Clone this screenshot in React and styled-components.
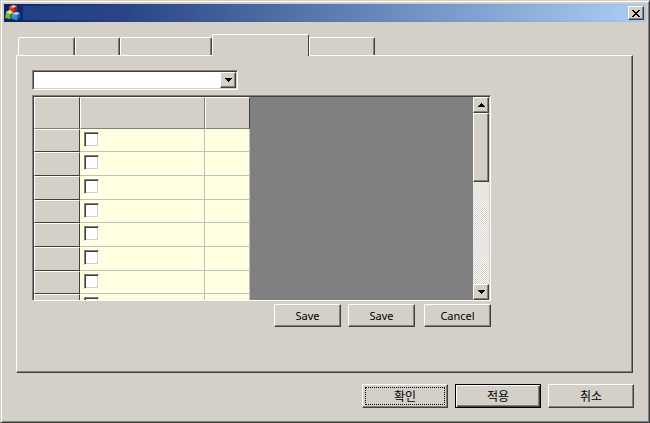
import React, { useState } from "react";
import styled, { createGlobalStyle, css } from "styled-components";

const face = "#d4d0c8";
const dark = "#404040";
const shadow = "#808080";

const GlobalStyle = createGlobalStyle`
  * { box-sizing: border-box; }
  body { margin: 0; background: ${face}; }
  button, select, input { font: inherit; color: inherit; border-radius: 0; }
`;

const raised = css`
  border: 1px solid;
  border-color: #fff ${dark} ${dark} #fff;
  box-shadow: inset -1px -1px 0 ${shadow};
  background: ${face};
`;

const Window = styled.main`
  min-height: 100vh;
  display: flex;
  flex-direction: column;
  padding: 2px;
  background: ${face};
  border: 1px solid;
  border-color: ${face} ${dark} ${dark} ${face};
  box-shadow: inset 1px 1px 0 #fff, inset -1px -1px 0 ${shadow};
  font: 12px/14px "Noto Sans", "Noto Sans CJK KR", sans-serif;
  color: #000;
`;

const TitleBar = styled.header`
  display: flex;
  align-items: center;
  justify-content: space-between;
  height: 18px;
  margin: 1px;
  padding: 0 2px 0 1px;
  background: linear-gradient(90deg, #0a246a, #a6caf0);
`;

const TitleFill = styled.div`
  flex: 1;
  height: 14px;
  margin: 0 2px;
  background: linear-gradient(90deg, #234083, #294585 17%, #a6caf0);
`;

const CloseButton = styled.button`
  ${raised}
  display: grid;
  place-items: center;
  width: 16px;
  height: 14px;
  padding: 0;
`;

const Tabs = styled.div`
  display: flex;
  align-items: flex-end;
  height: 21px;
  margin: 11px 15px 0 15px;
`;

const Tab = styled.button`
  width: ${(p) => p.$width}px;
  height: ${(p) => (p.$active ? 22 : 18)}px;
  margin-bottom: ${(p) => (p.$active ? -1 : 0)}px;
  padding: 0;
  border: solid;
  border-width: 1px 1px 0 1px;
  border-color: #fff ${dark} ${face} #fff;
  border-radius: 2px 2px 0 0;
  box-shadow: ${(p) => (p.$active ? "none" : `inset -1px 0 0 ${shadow}`)};
  background: ${face};
  position: relative;
`;

const Panel = styled.section`
  flex: 1;
  margin: 0 14px 0 13px;
  padding: 14px 15px;
  border: 1px solid;
  border-color: #fff ${dark} ${dark} #fff;
  box-shadow: inset -1px -1px 0 ${shadow};
`;

const Content = styled.div`
  width: 459px;
  max-width: 100%;
`;

const sunken = css`
  border: 1px solid;
  border-color: ${shadow} #fff #fff ${shadow};
`;

const Combo = styled.div`
  ${sunken}
  display: grid;
  grid-template-columns: 1fr 16px;
  width: 206px;
  height: 20px;
  padding: 1px;
  background: #fff;
  box-shadow: inset 1px 1px 0 ${dark}, inset -1px -1px 0 ${face};
`;

const ComboSelect = styled.select`
  grid-area: 1 / 1 / 2 / 3;
  appearance: none;
  width: 100%;
  height: 100%;
  border: 0;
  background: transparent;
`;

const ComboArrow = styled.span`
  ${raised}
  grid-area: 1 / 2;
  display: grid;
  place-items: center;
  pointer-events: none;
`;

const GridFrame = styled.div`
  ${sunken}
  display: flex;
  height: 206px;
  margin-top: 5px;
  padding: 1px 1px 0 1px;
  overflow: hidden;
  background: ${shadow};
  box-shadow: inset 1px 1px 0 ${dark}, inset -1px 0 0 ${face};
`;

const GridView = styled.div`
  flex: 1;
  overflow: hidden;
`;

const Table = styled.table`
  width: 216px;
  table-layout: fixed;
  border-collapse: separate;
  border-spacing: 0;
`;

const Row = styled.tr`
  height: 24px;
  &:nth-child(3n + 1) { height: 23px; }
`;

const HeadRow = styled.tr`
  height: 32px;
`;

const HeadCell = styled.th`
  padding: 0;
  width: ${(p) => (p.$width ? `${p.$width}px` : "auto")};
  background: ${face};
  border: 1px solid;
  border-color: #fff ${(p) => (p.$soft ? shadow : dark)} ${(p) => (p.scope === "row" ? dark : shadow)} #fff;
`;

const Cell = styled.td`
  padding: 0 0 0 3px;
  background: #ffffe1;
  border: solid #c0c0c0;
  border-width: 0 1px 1px 0;
  vertical-align: top;
`;

const Check = styled.input`
  appearance: none;
  display: block;
  width: 15px;
  height: 15px;
  margin: 3px 0 0 1px;
  background: #fff;
  border: 1px solid;
  border-color: ${shadow} #fff #fff ${shadow};
  box-shadow: inset 1px 1px 0 ${dark}, inset -1px -1px 0 ${face};
  &:checked { background: #404040; }
`;

const ScrollBar = styled.div`
  display: flex;
  flex-direction: column;
  width: 16px;
  background:
    linear-gradient(#d4d0c800 40%, #e8e6e2 46%, #d4d0c800 55%, #d4d0c800 62%, #e8e6e2 74%, #d4d0c800 84%),
    repeating-conic-gradient(#fff 0 25%, ${face} 0 50%) 0 0 / 2px 2px;
`;

const ScrollButton = styled.button`
  ${raised}
  display: grid;
  place-items: center;
  height: 16px;
  padding: 0;
`;

const Thumb = styled.div`
  ${raised}
  height: 69px;
  margin-bottom: auto;
`;

const Actions = styled.div`
  display: flex;
  justify-content: flex-end;
  gap: 7px;
  margin-top: 3px;
`;

const SmallButton = styled.button`
  ${raised}
  width: 67px;
  height: 23px;
  padding: 0;
  font-family: "Noto Sans", sans-serif;
  font-size: 11px;
  &:last-child { margin-left: 2px; }
`;

const Footer = styled.footer`
  display: flex;
  justify-content: flex-end;
  gap: 7px;
  padding: 11px 13px 12px;
`;

const DialogButton = styled.button`
  ${raised}
  width: 86px;
  height: 24px;
  padding: 2px;
  font-family: "Noto Sans CJK KR", sans-serif;
  ${(p) => p.$primary && css`
    border-color: #000;
    box-shadow: inset 1px 1px 0 #fff, inset -1px -1px 0 ${dark}, inset -2px -2px 0 ${shadow};
  `}
`;

const FocusRing = styled.span`
  display: block;
  height: 18px;
  line-height: 16px;
  border: 1px dotted ${(p) => (p.$on ? "#000" : "transparent")};
`;

const AppIcon = () => (
  <svg width="16" height="16" viewBox="0 0 16 16" aria-hidden="true">
    <path d="M4 2 7 0l5 1-1 7-3 1-4-2z" fill="#d63b20" />
    <path d="m5 2 3-2 4 1-3 2z" fill="#ffb29b" />
    <path d="m9 3 3-2-1 7-2 1z" fill="#a51d10" />
    <path d="m1 7 4-2 3 3v4l-3 2-5-1z" fill="#78b43c" />
    <path d="m1 7 4-2 3 3-3 1z" fill="#d5edab" />
    <path d="m5 9 3-1v4l-3 2z" fill="#3f7c24" />
    <path d="m7 9 4-2 4 1v4l-3 3-5-1z" fill="#3c8bd0" />
    <path d="m7 9 4-2 4 1-3 2z" fill="#a4dbf7" />
    <path d="m12 10 3-2v4l-3 3z" fill="#1b5da9" />
  </svg>
);

const Arrow = ({ up }) => (
  <svg width="7" height="4" viewBox="0 0 7 4" shapeRendering="crispEdges" aria-hidden="true">
    <path d={up ? "M3 0h1v1h1v1h1v1h1v1H0V3h1V2h1V1h1z" : "M0 0h7v1H6v1H5v1H4v1H3V3H2V2H1V1H0z"} />
  </svg>
);

const tabs = [57, 45, 92, 97, 66];
const rows = [1, 2, 3, 4, 5, 6, 7, 8];

export default function App() {
  const [active, setActive] = useState(3);
  return (
    <>
      <GlobalStyle />
      <Window>
        <TitleBar>
          <AppIcon />
          <TitleFill />
          <CloseButton aria-label="Close">
            <svg width="8" height="7" viewBox="0 0 8 7" shapeRendering="crispEdges" aria-hidden="true">
              <path d="M0 0h2v1h1v1h2V1h1V0h2v1H7v1H6v1H5v1h1v1h1v1h1v1H6V6H5V5H3v1H2v1H0V6h1V5h1V4h1V3H2V2H1V1H0z" />
            </svg>
          </CloseButton>
        </TitleBar>
        <Tabs role="tablist">
          {tabs.map((width, i) => (
            <Tab
              key={i}
              role="tab"
              aria-label={`Tab ${i + 1}`}
              aria-selected={i === active}
              $active={i === active}
              $width={width}
              onClick={() => setActive(i)}
            />
          ))}
        </Tabs>
        <Panel>
          <Content>
            <Combo>
              <ComboSelect aria-label="Category" />
              <ComboArrow><Arrow /></ComboArrow>
            </Combo>
            <GridFrame>
              <GridView>
                <Table>
                  <thead>
                    <HeadRow>
                      <HeadCell $width={46} />
                      <HeadCell $soft />
                      <HeadCell $width={45} />
                    </HeadRow>
                  </thead>
                  <tbody>
                    {rows.map((n) => (
                      <Row key={n}>
                        <HeadCell scope="row" />
                        <Cell><Check type="checkbox" aria-label={`Row ${n}`} /></Cell>
                        <Cell />
                      </Row>
                    ))}
                  </tbody>
                </Table>
              </GridView>
              <ScrollBar>
                <ScrollButton aria-label="Scroll up"><Arrow up /></ScrollButton>
                <Thumb />
                <ScrollButton aria-label="Scroll down"><Arrow /></ScrollButton>
              </ScrollBar>
            </GridFrame>
            <Actions>
              <SmallButton>Save</SmallButton>
              <SmallButton>Save</SmallButton>
              <SmallButton>Cancel</SmallButton>
            </Actions>
          </Content>
        </Panel>
        <Footer>
          <DialogButton><FocusRing $on>확인</FocusRing></DialogButton>
          <DialogButton $primary><FocusRing>적용</FocusRing></DialogButton>
          <DialogButton><FocusRing>취소</FocusRing></DialogButton>
        </Footer>
      </Window>
    </>
  );
}
